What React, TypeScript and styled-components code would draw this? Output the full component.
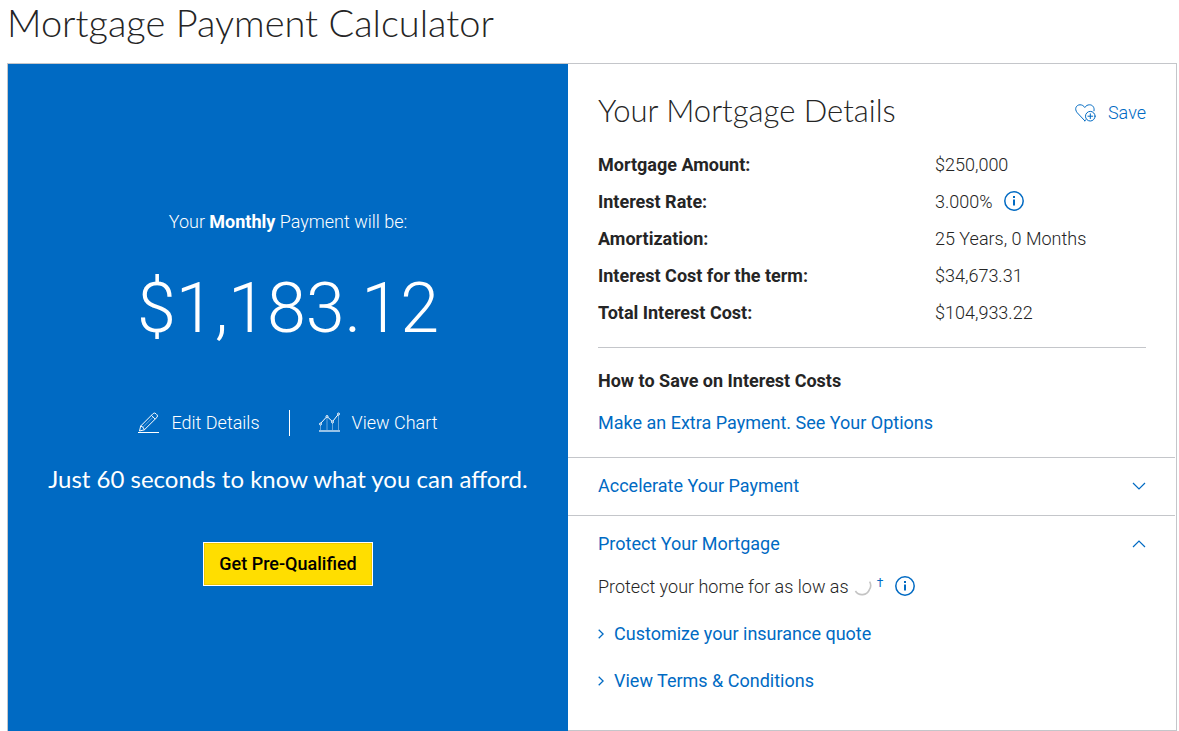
import React, { useState } from "react";
import styled, { createGlobalStyle } from "styled-components";

const BLUE = "#006ac3";
const LINE = "#c4c6ca";
const INK = "#252525";

const GlobalStyle = createGlobalStyle`
  *, *::before, *::after { box-sizing: border-box; }
  body {
    margin: 0;
    background: #fff;
    color: ${INK};
    font-family: Roboto, "Liberation Sans", sans-serif;
    font-size: 18px;
    font-weight: 300;
    line-height: 24px;
  }
  h1, h2, h3, p { margin: 0; }
  a { color: inherit; text-decoration: none; }
  a:hover { text-decoration: underline; }
  button { font: inherit; cursor: pointer; }
  svg { display: block; flex: none; }
`;

const Page = styled.main`
  padding: 0 2px 0 7px;
`;

const PageTitle = styled.h1`
  height: 63px;
  font-family: Lato, "Open Sans", sans-serif;
  font-size: 38px;
  font-weight: 300;
  line-height: 44px;
  white-space: nowrap;
`;

const Card = styled.section`
  display: grid;
  grid-template-columns: 35fr 38fr;
  border: 1px solid ${LINE};
  border-bottom: 0;
`;

const PaymentPanel = styled.div`
  display: flex;
  flex-direction: column;
  align-items: center;
  justify-content: center;
  background: ${BLUE};
  color: #fff;
  text-align: center;
`;

const Intro = styled.p`
  strong { font-weight: 700; }
`;

const Amount = styled.p`
  margin-top: 32px;
  font-size: 70px;
  line-height: 84px;
`;

const Actions = styled.div`
  display: flex;
  align-items: center;
  margin-top: 60px;
`;

const Action = styled.button`
  display: flex;
  align-items: center;
  gap: 12px;
  padding: 0;
  border: 0;
  background: none;
  color: #fff;
`;

const ActionDivider = styled.span`
  width: 1px;
  height: 26px;
  margin: 0 29px;
  background: #fff;
`;

const Pitch = styled.p`
  margin-top: 27px;
  font-family: Lato, "Open Sans", sans-serif;
  font-size: 24px;
  font-weight: 400;
  line-height: 32px;
`;

const PrimaryButton = styled.button`
  height: 44px;
  margin-top: 47px;
  padding: 0 15px;
  border: 1px solid #fff;
  background: #ffde00;
  box-shadow: inset 0 0 0 1px #ecc800;
  color: #000;
  font-weight: 500;
`;

const DetailsPanel = styled.div`
  border-bottom: 1px solid ${LINE};
`;

const Summary = styled.div`
  padding: 26px 30px 22px;
`;

const SummaryHeader = styled.div`
  display: flex;
  align-items: center;
  justify-content: space-between;
  height: 44px;
  margin-bottom: 12px;
`;

const SectionTitle = styled.h2`
  padding-bottom: 4px;
  font-family: Lato, "Open Sans", sans-serif;
  font-size: 31px;
  font-weight: 300;
  line-height: 40px;
`;

const SaveLink = styled.a`
  display: flex;
  align-items: center;
  gap: 12px;
  padding-top: 2px;
  color: ${BLUE};
`;

const DetailsTable = styled.table`
  width: 100%;
  border-collapse: collapse;
  table-layout: fixed;

  th, td {
    height: 37px;
    padding: 0;
    text-align: left;
    vertical-align: middle;
  }
  th { width: 337px; font-weight: 700; }
`;

const InlineRow = styled.div<{ $gap: number }>`
  display: flex;
  align-items: center;
  gap: ${(p) => p.$gap}px;
`;

const Rule = styled.hr`
  height: 1px;
  margin: 16px 0 21px;
  border: 0;
  background: ${LINE};
`;

const SubTitle = styled.h3`
  margin-bottom: 18px;
  font-size: 18px;
  font-weight: 700;
  line-height: 24px;
`;

const TextLink = styled.a`
  color: ${BLUE};
  font-weight: 400;
`;

const AccordionItem = styled.section`
  margin-right: 1px;
  border-top: 1px solid ${LINE};
`;

const AccordionHeader = styled.button`
  display: flex;
  align-items: center;
  justify-content: space-between;
  width: 100%;
  height: 57px;
  padding: 0 29px 1px 30px;
  border: 0;
  background: none;
  color: ${BLUE};
  font-weight: 400;
`;

const AccordionBody = styled.div`
  display: flex;
  flex-direction: column;
  gap: 23px;
  padding: 2px 30px 37px;
`;

const IconButton = styled.button`
  display: block;
  padding: 0 0 2px;
  border: 0;
  background: none;
  color: ${BLUE};
`;

const Dagger = styled.sup`
  align-self: flex-start;
  margin-right: 7px;
  color: ${BLUE};
  font-size: 12px;
  font-weight: 400;
  line-height: 16px;
`;

const ArrowLink = styled.a`
  display: flex;
  align-items: center;
  gap: 10px;
  color: ${BLUE};
  font-weight: 400;
`;

const InfoIcon = () => (
  <svg width="20" height="20" viewBox="0 0 20 20" fill="none" stroke="currentColor" aria-hidden="true">
    <circle cx="10" cy="10" r="9.2" strokeWidth="1.5" />
    <path d="M10 8.4v6" strokeWidth="2" />
    <path d="M10 5v2" strokeWidth="2" />
  </svg>
);

const PencilIcon = () => (
  <svg width="21" height="21" viewBox="0 0 21 21" fill="none" stroke="#fff" strokeWidth="1" strokeLinejoin="round" aria-hidden="true">
    <path d="M1.5 19 2.7 14 15.2 1.5Q16.5.5 18 1.8L19 2.8Q20 4 19 5.3L6.4 17.8z" />
    <path d="M2.7 14q2.9.6 3.7 3.8M13.4 3.3l3.8 3.8" />
    <path d="M5 15.2 15.2 5" strokeOpacity=".35" />
    <path d="M0 20.5h21" />
  </svg>
);

const ChartIcon = () => (
  <svg width="21" height="21" viewBox="0 0 21 21" fill="none" stroke="#fff" aria-hidden="true">
    <path d="M1.8 11.2 7.4 5.1M8.6 5 13 9.2M14 9 19 2.7" />
    <circle cx="1.5" cy="12" r="1" />
    <circle cx="8" cy="4.5" r="1" />
    <circle cx="13.5" cy="10" r="1" />
    <circle cx="19.5" cy="2" r="1" />
    <path d="M1.5 13v5M8 5.5V18M13.5 11v7M19.5 3v15" strokeOpacity=".4" />
    <path d="M0 19h21" strokeWidth="1.6" strokeOpacity=".75" />
  </svg>
);

const HeartIcon = () => (
  <svg width="21" height="20" viewBox="0 0 21 20" fill="none" stroke={BLUE} strokeLinecap="round" strokeLinejoin="round" aria-hidden="true">
    <path d="M9.8 17.8 2.2 9.7C-1 5.8 1.4 1.8 5 1.8c2.1 0 3.6.9 4.8 2.7 1.2-1.8 2.7-2.7 4.8-2.7 3 0 5.2 2.7 4.4 6" />
    <path d="m9.8 17.8 1.2-1.1" />
    <circle cx="15.3" cy="13.2" r="4.8" />
    <path d="M15.3 10.8v4.8M12.9 13.2h4.8" />
  </svg>
);

const Chevron = ({ open }: { open: boolean }) => (
  <svg width="14" height="8" viewBox="0 0 14 8" fill="none" stroke="currentColor" strokeWidth="1.2" aria-hidden="true">
    <path d={open ? "M1 7 7 1l6 6" : "m1 1 6 6 6-6"} />
  </svg>
);

const ArrowIcon = () => (
  <svg width="6" height="10" viewBox="0 0 6 10" fill="none" stroke="currentColor" strokeWidth="1.3" aria-hidden="true">
    <path d="m.7.8 4.4 4.2L.7 9.2" />
  </svg>
);

const Spinner = () => (
  <svg width="18" height="18" viewBox="0 0 18 18" fill="none" role="img" aria-label="Loading">
    <path d="M15.6 3.6q2.4 4-.2 8A7.9 7.9 0 0 1 1.4 13" stroke="#c4c4c4" strokeWidth="1.6" />
  </svg>
);

const details = [
  { label: "Mortgage Amount:", value: "$250,000" },
  { label: "Interest Rate:", value: "3.000%", info: true },
  { label: "Amortization:", value: "25 Years, 0 Months" },
  { label: "Interest Cost for the term:", value: "$34,673.31" },
  { label: "Total Interest Cost:", value: "$104,933.22" },
];

function Accordion({ title, initiallyOpen = false, children }: { title: string; initiallyOpen?: boolean; children?: React.ReactNode }) {
  const [open, setOpen] = useState(initiallyOpen);
  return (
    <AccordionItem>
      <AccordionHeader aria-expanded={open} onClick={() => setOpen(!open)}>
        {title}
        <Chevron open={open} />
      </AccordionHeader>
      {open && children}
    </AccordionItem>
  );
}

export default function App() {
  return (
    <Page>
      <GlobalStyle />
      <PageTitle>Mortgage Payment Calculator</PageTitle>
      <Card>
        <PaymentPanel>
          <Intro>Your <strong>Monthly</strong> Payment will be:</Intro>
          <Amount>$1,183.12</Amount>
          <Actions>
            <Action><PencilIcon />Edit Details</Action>
            <ActionDivider />
            <Action><ChartIcon />View Chart</Action>
          </Actions>
          <Pitch>Just 60 seconds to know what you can afford.</Pitch>
          <PrimaryButton>Get Pre-Qualified</PrimaryButton>
        </PaymentPanel>
        <DetailsPanel>
          <Summary>
            <SummaryHeader>
              <SectionTitle>Your Mortgage Details</SectionTitle>
              <SaveLink href="#save"><HeartIcon />Save</SaveLink>
            </SummaryHeader>
            <DetailsTable>
              <tbody>
                {details.map((row) => (
                  <tr key={row.label}>
                    <th scope="row">{row.label}</th>
                    <td>
                      <InlineRow $gap={11}>
                        {row.value}
                        {row.info && <IconButton aria-label="About the interest rate"><InfoIcon /></IconButton>}
                      </InlineRow>
                    </td>
                  </tr>
                ))}
              </tbody>
            </DetailsTable>
            <Rule />
            <SubTitle>How to Save on Interest Costs</SubTitle>
            <TextLink href="#extra-payment">Make an Extra Payment. See Your Options</TextLink>
          </Summary>
          <Accordion title="Accelerate Your Payment" />
          <Accordion title="Protect Your Mortgage" initiallyOpen>
            <AccordionBody>
              <InlineRow $gap={5}>
                Protect your home for as low as
                <Spinner />
                <Dagger>†</Dagger>
                <IconButton aria-label="About mortgage protection"><InfoIcon /></IconButton>
              </InlineRow>
              <ArrowLink href="#quote"><ArrowIcon />Customize your insurance quote</ArrowLink>
              <ArrowLink href="#terms"><ArrowIcon />View Terms &amp; Conditions</ArrowLink>
            </AccordionBody>
          </Accordion>
        </DetailsPanel>
      </Card>
    </Page>
  );
}
